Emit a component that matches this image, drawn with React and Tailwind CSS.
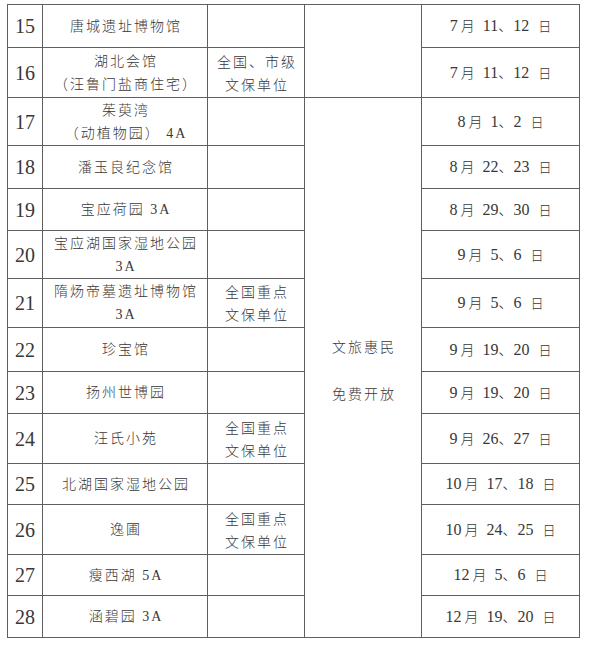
import React from "react";

const rows = [
  { n: "15", name: ["唐城遗址博物馆"], lvl: null, date: ["7", "11", "12"] },
  { n: "16", name: ["湖北会馆", "（汪鲁门盐商住宅）"], lvl: ["全国、市级", "文保单位"], date: ["7", "11", "12"] },
  { n: "17", name: ["茱萸湾", "（动植物园） 4A"], lvl: null, date: ["8", "1", "2"] },
  { n: "18", name: ["潘玉良纪念馆"], lvl: null, date: ["8", "22", "23"] },
  { n: "19", name: ["宝应荷园 3A"], lvl: null, date: ["8", "29", "30"] },
  { n: "20", name: ["宝应湖国家湿地公园", "3A"], lvl: null, date: ["9", "5", "6"] },
  { n: "21", name: ["隋炀帝墓遗址博物馆", "3A"], lvl: ["全国重点", "文保单位"], date: ["9", "5", "6"] },
  { n: "22", name: ["珍宝馆"], lvl: null, date: ["9", "19", "20"] },
  { n: "23", name: ["扬州世博园"], lvl: null, date: ["9", "19", "20"] },
  { n: "24", name: ["汪氏小苑"], lvl: ["全国重点", "文保单位"], date: ["9", "26", "27"] },
  { n: "25", name: ["北湖国家湿地公园"], lvl: null, date: ["10", "17", "18"] },
  { n: "26", name: ["逸圃"], lvl: ["全国重点", "文保单位"], date: ["10", "24", "25"] },
  { n: "27", name: ["瘦西湖 5A"], lvl: null, date: ["12", "5", "6"] },
  { n: "28", name: ["涵碧园 3A"], lvl: null, date: ["12", "19", "20"] },
];

const rowStart = [
  "row-start-1", "row-start-2", "row-start-3", "row-start-4", "row-start-5", "row-start-6", "row-start-7",
  "row-start-8", "row-start-9", "row-start-10", "row-start-11", "row-start-12", "row-start-13", "row-start-14",
];

function Lines({ lines }) {
  return (
    <div className="flex flex-col items-center leading-[23px]">
      {lines.map((l, i) => (
        <span key={i} className="whitespace-pre pl-[2px]">{l}</span>
      ))}
    </div>
  );
}

function DateText({ d }) {
  const [m, a, b] = d;
  return (
    <span className="flex items-baseline whitespace-pre">
      <span className="text-[16px] font-['Liberation_Serif',serif]">{m}</span>
      <span className="text-[14px] font-light ml-[3px] mr-[8px] font-['Noto_Sans_CJK_SC',sans-serif]">月</span>
      <span className="text-[16px] font-['Liberation_Serif',serif]">{a}</span>
      <span className="text-[14px] font-light font-['Noto_Sans_CJK_SC',sans-serif]">、</span>
      <span className="text-[16px] ml-[1px] font-['Liberation_Serif',serif]">{b}</span>
      <span className="text-[13px] font-light ml-[9px] font-['Noto_Sans_CJK_SC',sans-serif]">日</span>
    </span>
  );
}

export default function App() {
  return (
    <div className="w-[589px] h-[645px] bg-white pl-[7px] pt-[4px]">
      <div className="grid grid-cols-[34px_164px_96px_116px_157px] grid-rows-[42px_49px_47px_42px_41px_47px_48px_43px_41px_49px_40px_49px_40px_41px] gap-px bg-[#5f5f5f] p-px w-fit text-[#383838]">
        {rows.map((r, i) => (
          <React.Fragment key={r.n}>
            <div
              className={`${rowStart[i]} col-start-1 bg-white flex items-center justify-center text-[20px] font-['Liberation_Serif',serif]`}
            >
              {r.n}
            </div>
            <div
              className={`${rowStart[i]} col-start-2 bg-white flex items-center justify-center text-[14px] font-light tracking-[2px] font-['Liberation_Serif','Noto_Sans_CJK_SC',serif]`}
            >
              <Lines lines={r.name} />
            </div>
            <div
              className={`${rowStart[i]} col-start-3 bg-white flex items-center justify-center text-[14px] font-light tracking-[2px] font-['Noto_Sans_CJK_SC',sans-serif]`}
            >
              {r.lvl ? <Lines lines={r.lvl} /> : null}
            </div>
            <div className={`${rowStart[i]} col-start-5 bg-white flex items-center justify-center`}>
              <DateText d={r.date} />
            </div>
          </React.Fragment>
        ))}
        <div className="row-start-1 row-span-2 col-start-4 bg-white" />
        <div className="row-start-3 row-span-12 col-start-4 bg-white flex flex-col items-center justify-center gap-[26px] text-[14px] font-light tracking-[2px] pt-[4px] font-['Noto_Sans_CJK_SC',sans-serif]">
          <span className="pl-[2px]">文旅惠民</span>
          <span className="pl-[2px]">免费开放</span>
        </div>
      </div>
    </div>
  );
}
